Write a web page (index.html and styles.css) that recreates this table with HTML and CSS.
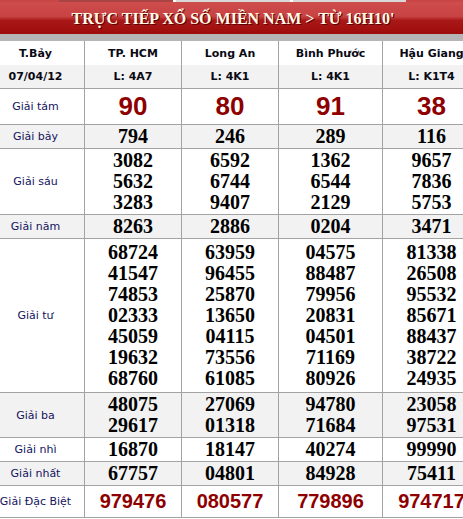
FILE: index.html
```html
<!DOCTYPE html>
<html lang="vi">
<head>
<meta charset="utf-8">
<title>Trực tiếp xổ số miền Nam</title>
<link rel="stylesheet" href="styles.css">
</head>
<body>
<div class="wrap">
  <div class="tabs">
    <span class="tab t1"></span>
    <span class="tab t2"></span>
    <span class="tab t3"></span>
    <span class="tab t4"></span>
    <span class="tab t5"></span>
  </div>
  <div class="banner">TRỰC TIẾP XỔ SỐ MIỀN NAM &gt; TỪ 16H10'</div>
  <div class="sep"></div>
  <table class="kq">
    <colgroup>
      <col class="c-label"><col class="c-a"><col class="c-b"><col class="c-c"><col class="c-d">
    </colgroup>
    <tr class="r-head">
      <td>T.Bảy</td><td>TP. HCM</td><td>Long An</td><td>Bình Phước</td><td>Hậu Giang</td>
    </tr>
    <tr class="r-date alt">
      <td>07/04/12</td><td>L: 4A7</td><td>L: 4K1</td><td>L: 4K1</td><td>L: K1T4</td>
    </tr>
    <tr class="r-tam">
      <td class="lbl">Giải tám</td><td class="big">90</td><td class="big">80</td><td class="big">91</td><td class="big">38</td>
    </tr>
    <tr class="r-one alt">
      <td class="lbl">Giải bảy</td><td class="num">794</td><td class="num">246</td><td class="num">289</td><td class="num">116</td>
    </tr>
    <tr class="r-sau">
      <td class="lbl">Giải sáu</td>
      <td class="num"><div>3082</div><div>5632</div><div>3283</div></td>
      <td class="num"><div>6592</div><div>6744</div><div>9407</div></td>
      <td class="num"><div>1362</div><div>6544</div><div>2129</div></td>
      <td class="num"><div>9657</div><div>7836</div><div>5753</div></td>
    </tr>
    <tr class="r-one alt">
      <td class="lbl">Giải năm</td><td class="num">8263</td><td class="num">2886</td><td class="num">0204</td><td class="num">3471</td>
    </tr>
    <tr class="r-tu">
      <td class="lbl">Giải tư</td>
      <td class="num"><div>68724</div><div>41547</div><div>74853</div><div>02333</div><div>45059</div><div>19632</div><div>68760</div></td>
      <td class="num"><div>63959</div><div>96455</div><div>25870</div><div>13650</div><div>04115</div><div>73556</div><div>61085</div></td>
      <td class="num"><div>04575</div><div>88487</div><div>79956</div><div>20831</div><div>04501</div><div>71169</div><div>80926</div></td>
      <td class="num"><div>81338</div><div>26508</div><div>95532</div><div>85671</div><div>88437</div><div>38722</div><div>24935</div></td>
    </tr>
    <tr class="r-ba alt">
      <td class="lbl">Giải ba</td>
      <td class="num"><div>48075</div><div>29617</div></td>
      <td class="num"><div>27069</div><div>01318</div></td>
      <td class="num"><div>94780</div><div>71684</div></td>
      <td class="num"><div>23058</div><div>97531</div></td>
    </tr>
    <tr class="r-one">
      <td class="lbl">Giải nhì</td><td class="num">16870</td><td class="num">18147</td><td class="num">40274</td><td class="num">99990</td>
    </tr>
    <tr class="r-one alt">
      <td class="lbl">Giải nhất</td><td class="num">67757</td><td class="num">04801</td><td class="num">84928</td><td class="num">75411</td>
    </tr>
    <tr class="r-db">
      <td class="lbl">Giải Đặc Biệt</td><td class="db">979476</td><td class="db">080577</td><td class="db">779896</td><td class="db">974717</td>
    </tr>
  </table>
</div>
</body>
</html>
```

FILE: styles.css
```css
html, body {
  margin: 0;
  padding: 0;
  overflow: hidden;
  background: #fff;
}

.wrap {
  width: 494px;
  margin-left: -14px;
}

.tabs {
  display: flex;
  height: 2px;
}
.tab { display: block; height: 2px; }
.t1 { width: 73px; background: #c84646; }
.t2 { width: 114px; background: #a84444; margin-right: 3px; }
.t3 { width: 114px; background: #d9d9d9; margin-right: 3px; }
.t4 { width: 113px; background: #d9d9d9; }
.t5 { flex: 1; background: #c84646; }

.banner {
  height: 32px;
  line-height: 33px;
  text-align: center;
  font-family: "Liberation Serif", serif;
  font-weight: bold;
  font-size: 16px;
  color: #fffbe8;
  text-shadow: 1px 1px 0 #5a0000;
  background: linear-gradient(to bottom, #cf4d4d 0%, #c84242 45%, #a91818 58%, #9e0b0b 100%);
}

.sep {
  height: 7px;
  background: #b5b5b5;
}

.kq {
  width: 494px;
  border-collapse: collapse;
  table-layout: fixed;
  font-family: "DejaVu Sans", sans-serif;
  font-size: 11px;
}
.c-label { width: 98px; }
.c-a { width: 97px; }
.c-b { width: 97px; }
.c-c { width: 104px; }
.c-d { width: 98px; }

.kq td {
  border: 1px solid #a3a3a3;
  padding: 0;
  text-align: center;
  vertical-align: middle;
  white-space: nowrap;
}
.kq tr:first-child td { border-top: none; }

.alt td { background: #f2f2f2; }

.r-head td {
  height: 24px;
  font-weight: bold;
  color: #0a0a14;
  border-bottom: none;
}
.r-date td {
  height: 23px;
  font-weight: bold;
  color: #0a0a14;
  border-top: none;
}
.r-tam td { height: 35px; }
.r-one td { height: 23px; }
.r-sau td { height: 65px; }
.r-tu td { height: 153px; }
.r-ba td { height: 44px; }
.r-db td { height: 31px; }

.lbl {
  color: #14145e;
}

.num {
  font-family: "Liberation Serif", serif;
  font-weight: bold;
  font-size: 20px;
  line-height: 21px;
  color: #000;
}

.big {
  font-family: "Liberation Sans", sans-serif;
  font-weight: bold;
  font-size: 26px;
  color: #8e0000;
}

.db {
  font-family: "Liberation Sans", sans-serif;
  font-weight: bold;
  font-size: 20px;
  color: #8e0000;
}
```
